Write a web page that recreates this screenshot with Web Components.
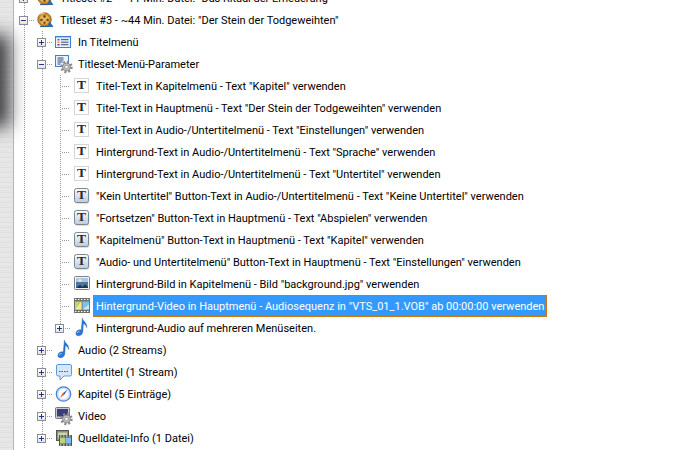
<!DOCTYPE html>
<html><head><meta charset="utf-8">
<style>
html,body{margin:0;padding:0;width:685px;height:450px;overflow:hidden;background:#fff}
body{font:11px Roboto,"Noto Sans",sans-serif;color:#000}
</style></head><body>
<app-window>
<tree-row lvl="0" kind="plus" icon="reel">Titleset #2 - ~11 Min. Datei: "Das Ritual der Erneuerung"</tree-row>
<tree-row lvl="0" kind="minus" icon="reel">Titleset #3 - ~44 Min. Datei: "Der Stein der Todgeweihten"</tree-row>
<tree-row lvl="1" kind="plus" icon="list">In Titelmenü</tree-row>
<tree-row lvl="1" kind="minus" icon="listgear">Titleset-Menü-Parameter</tree-row>
<tree-row lvl="2" kind="leaf" icon="t">Titel-Text in Kapitelmenü - Text "Kapitel" verwenden</tree-row>
<tree-row lvl="2" kind="leaf" icon="t">Titel-Text in Hauptmenü - Text "Der Stein der Todgeweihten" verwenden</tree-row>
<tree-row lvl="2" kind="leaf" icon="t">Titel-Text in Audio-/Untertitelmenü - Text "Einstellungen" verwenden</tree-row>
<tree-row lvl="2" kind="leaf" icon="t">Hintergrund-Text in Audio-/Untertitelmenü - Text "Sprache" verwenden</tree-row>
<tree-row lvl="2" kind="leaf" icon="t">Hintergrund-Text in Audio-/Untertitelmenü - Text "Untertitel" verwenden</tree-row>
<tree-row lvl="2" kind="leaf" icon="tb">"Kein Untertitel" Button-Text in Audio-/Untertitelmenü - Text "Keine Untertitel" verwenden</tree-row>
<tree-row lvl="2" kind="leaf" icon="tb">"Fortsetzen" Button-Text in Hauptmenü - Text "Abspielen" verwenden</tree-row>
<tree-row lvl="2" kind="leaf" icon="tb">"Kapitelmenü" Button-Text in Hauptmenü - Text "Kapitel" verwenden</tree-row>
<tree-row lvl="2" kind="leaf" icon="tb">"Audio- und Untertitelmenü" Button-Text in Hauptmenü - Text "Einstellungen" verwenden</tree-row>
<tree-row lvl="2" kind="leaf" icon="img">Hintergrund-Bild in Kapitelmenü - Bild "background.jpg" verwenden</tree-row>
<tree-row lvl="2" kind="leaf" icon="film" selected>Hintergrund-Video in Hauptmenü - Audiosequenz in "VTS_01_1.VOB" ab 00:00:00 verwenden</tree-row>
<tree-row lvl="2" kind="plus" icon="note" last>Hintergrund-Audio auf mehreren Menüseiten.</tree-row>
<tree-row lvl="1" kind="plus" icon="note">Audio (2 Streams)</tree-row>
<tree-row lvl="1" kind="plus" icon="bubble">Untertitel (1 Stream)</tree-row>
<tree-row lvl="1" kind="plus" icon="clock">Kapitel (5 Einträge)</tree-row>
<tree-row lvl="1" kind="plus" icon="video">Video</tree-row>
<tree-row lvl="1" kind="plus" icon="source" last>Quelldatei-Info (1 Datei)</tree-row>
</app-window>
<script>
const GEAR=`<g transform="translate(11.5 11)"><circle r="4.6" fill="none" stroke="#8a8a8a" stroke-width="3.2" stroke-dasharray="1.8 1.8"/><circle r="4" fill="#c4c4c4" stroke="#7a7a7a" stroke-width=".8"/><circle r="1.9" fill="#efefef" stroke="#808080" stroke-width=".7"/></g>`;
const T=`<text x="8.5" y="11" text-anchor="middle" font-family="Liberation Serif" font-weight="700" font-size="13.5" fill="#2a2a2a">T</text>`;
const ICONS={
reel:`<circle cx="7.5" cy="7.5" r="6.8" fill="#c98a2c" stroke="#8a5a1a" stroke-width=".8"/><circle cx="7.5" cy="7.5" r="4.8" fill="#e8b75a"/><circle cx="7.5" cy="4.4" r="1.3" fill="#6b4a20"/><circle cx="4.4" cy="8" r="1.3" fill="#6b4a20"/><circle cx="10.6" cy="8" r="1.3" fill="#6b4a20"/><circle cx="7.5" cy="10.8" r="1.2" fill="#6b4a20"/><path d="M1.5 2.5l6-1.5" stroke="#f0dcae" stroke-width="1"/><path d="M10.5 14l2-5 4 6h-6z" fill="#2f6fa8"/><path d="M3 14.5h9" stroke="#3b5f80" stroke-width="1.2"/>`,
list:`<rect x=".5" y="2.5" width="15" height="11" fill="#eaf3fd" stroke="#3f7fd0"/><rect x="1" y="3" width="14" height="1.2" fill="#a9cdf2"/><rect x="2.5" y="5" width="2" height="1.5" fill="#d8402a"/><rect x="2.5" y="7.5" width="2" height="1.5" fill="#e8a020"/><rect x="2.5" y="10" width="2" height="1.5" fill="#7030a0"/><path d="M6 5.7h7.5M6 8.2h7.5M6 10.7h7.5" stroke="#304a78"/>`,
listgear:`<rect x=".5" y="-.5" width="13" height="11" fill="#eaf3fd" stroke="#3f7fd0"/><path d="M2.5 2h6M2.5 4h6M2.5 6h5M2.5 8h3" stroke="#304a78"/>${GEAR}`,
t:`<rect x="1.5" y=".5" width="14" height="14" fill="#fff" stroke="#aaa" stroke-dasharray="1 1"/>${T}`,
tb:`<defs><linearGradient id="b" x1="0" y1="0" x2="0" y2="1"><stop offset="0" stop-color="#fbfcfe"/><stop offset="1" stop-color="#bccbdc"/></linearGradient></defs><rect x="2.5" y="2" width="14" height="14" rx="2" fill="#bbb" opacity=".45"/><rect x="1.5" y=".5" width="14" height="14" rx="2" fill="url(#b)" stroke="#7a8796"/>${T}`,
img:`<rect x="1.5" y=".5" width="15" height="13" rx="1" fill="#f4f4f4" stroke="#808080"/><rect x="3" y="2" width="12" height="10" fill="#4a76a8"/><rect x="3" y="2" width="12" height="4" fill="#a8c8e6"/><circle cx="7" cy="4.5" r="1.6" fill="#f5e9b0"/><path d="M3 12l4-3 3 2 2-3 1.5 2 1.5 1v1z" fill="#1d3350"/>`,
film:`<rect x="1" y="0" width="16" height="15" fill="#707070"/><path d="M2 1.5h1.5M5 1.5h1.5M8 1.5h1.5M11 1.5h1.5M14 1.5h1.5M2 13.5h1.5M5 13.5h1.5M8 13.5h1.5M11 13.5h1.5M14 13.5h1.5" stroke="#fff"/><rect x="2" y="3.5" width="6.5" height="8" fill="#b8d676"/><path d="M2 11.5l6.5-8v8z" fill="#f3ea90"/><rect x="9.5" y="3.5" width="6.5" height="8" fill="#7fc0ea"/><path d="M9.5 11.5l6.5-5v5z" fill="#c6e6fa"/>`,
note:`<path d="M9.4-2c.2 3.4 4.8 4.2 4.3 9.6-.7-2.7-2-3.6-3.4-3.9L9.8 12c-.2 2.1-2.2 3.8-4.3 3.8-1.6 0-2.6-1-2.6-2.4 0-2.1 2.1-3.6 4-3.6.6 0 1 .1 1.4.3z" fill="#2a78d6" stroke="#1a55a8" stroke-width=".4"/><path d="M4.2 13.2c.2-1 1.2-1.7 2.2-1.7" stroke="#bfe0ff" fill="none"/>`,
bubble:`<path d="M3 .5h12a1.5 1.5 0 011.5 1.5v8.5a1.5 1.5 0 01-1.5 1.5H9l-4 4v-4H3a1.5 1.5 0 01-1.5-1.5V2A1.5 1.5 0 013 .5z" fill="#d5e8fa" stroke="#5c9ade"/><path d="M4 7.5h1.5M6.5 7.5H8M9 7.5h1.5M11.5 7.5H13" stroke="#2a5fa8"/>`,
clock:`<circle cx="8.5" cy="8" r="7.2" fill="#dcebfb" stroke="#4a7fc8" stroke-width="1.3"/><circle cx="8.5" cy="8" r="5.4" fill="#fff" stroke="#b8d0ea" stroke-width=".6"/><path d="M12.5 3.5L9.3 8.7 7.8 7.2z" fill="#3060a8"/><path d="M4.8 11.7L7.8 7.2 9.3 8.7z" fill="#e0522a"/>`,
video:`<rect x=".5" y="-.5" width="14" height="11" rx="1" fill="#c8c8d0" stroke="#777"/><rect x="2" y="1" width="11" height="7.5" fill="#3c3c78"/>${GEAR}`,
source:`<rect x="1.5" y=".5" width="12" height="10" fill="#8a8a8a" stroke="#555"/><rect x="3" y="2.5" width="9" height="6" fill="#c8d8a0"/><rect x="4" y="5" width="13" height="11" fill="#555"/><path d="M5 6h1.5M8 6h1.5M11 6h1.5M14 6h1.5M5 15h1.5M8 15h1.5M11 15h1.5M14 15h1.5" stroke="#fff"/><rect x="5" y="7.5" width="5.5" height="6" fill="#b8d676"/><rect x="11" y="7.5" width="5" height="6" fill="#7fc0ea"/>`
};
customElements.define('tree-icon',class extends HTMLElement{
  static get observedAttributes(){return['name']}
  constructor(){super();this.attachShadow({mode:'open'});}
  attributeChangedCallback(){
    this.shadowRoot.innerHTML=`<style>:host{display:block;width:16px;height:16px;flex:none}svg{display:block;overflow:visible}</style><svg width="16" height="16" viewBox="0 0 16 16">${ICONS[this.getAttribute('name')]||''}</svg>`;
  }
});
customElements.define('tree-toggle',class extends HTMLElement{
  static get observedAttributes(){return['kind']}
  constructor(){super();this.attachShadow({mode:'open'});}
  attributeChangedCallback(){
    const k=this.getAttribute('kind');
    this.shadowRoot.innerHTML=`<style>
    :host{display:block;width:9px;height:9px;box-sizing:border-box;border:1px solid #8c8c94;background:linear-gradient(#fff,#e4e4e0);position:relative}
    .h,.v{position:absolute;background:#22348c}
    .h{left:1px;top:3px;width:5px;height:1px}
    .v{left:3px;top:1px;width:1px;height:5px}
    </style><div class="h"></div>${k==='plus'?'<div class="v"></div>':''}`;
  }
});
const DV='repeating-linear-gradient(#999 0 1px,transparent 1px 2px)';
const DH='repeating-linear-gradient(90deg,#999 0 1px,transparent 1px 2px)';
const tpl=document.createElement('template');
tpl.innerHTML=`<style>
:host{display:flex;height:22px;align-items:center;white-space:nowrap}
.g{width:18px;height:22px;flex:none;background:${DV} 9px 0/1px 100% no-repeat}
.e{width:22px;height:22px;flex:none;box-sizing:border-box;padding-left:4px;display:flex;align-items:center;background:${DV} 9px 0/1px 100% no-repeat,${DH} 14px 11px/6px 1px no-repeat}
.e.last{background:${DV} 9px 0/1px 11px no-repeat,${DH} 14px 11px/6px 1px no-repeat}
.leaf{width:22px;height:22px;flex:none;background:${DV} 9px 0/1px 100% no-repeat,${DH} 11px 11px/8px 1px no-repeat}
.lbl{height:22px;line-height:24px;padding:0 3px;margin-left:4px;box-sizing:border-box;color:#000}
:host([selected]) .lbl{background:#3399ff;color:#fff;outline:1px dotted #c9780f;outline-offset:-1px}
</style><span id="g" style="display:contents"></span><tree-icon id="i"></tree-icon><div class="lbl"><slot></slot></div>`;
customElements.define('tree-row',class extends HTMLElement{
  constructor(){super();
    this.attachShadow({mode:'open'}).appendChild(tpl.content.cloneNode(true));
  }
  connectedCallback(){
    const s=this.shadowRoot;
    s.getElementById('i').setAttribute('name',this.getAttribute('icon'));
    const lvl=+this.getAttribute('lvl'),kind=this.getAttribute('kind');
    let h='<div class="g"></div>'.repeat(lvl);
    h+=kind==='leaf'?'<div class="leaf"></div>':`<div class="e${this.hasAttribute('last')?' last':''}"><tree-toggle kind="${kind}"></tree-toggle></div>`;
    s.getElementById('g').innerHTML=h;
  }
});
customElements.define('app-window',class extends HTMLElement{
  constructor(){super();
    this.attachShadow({mode:'open'}).innerHTML=`<style>
    :host{display:flex;width:685px;height:450px;overflow:hidden;background:#fff;position:relative}
    .side{width:13px;flex:none;height:450px;background:repeating-linear-gradient(#e5e5e5 0 2px,#dfdfdf 2px 3px,#e7e7e7 3px 5px);border-right:1px solid #b4b4bc}
    .shadow{position:absolute;left:-12px;top:44px;width:12px;height:74px;background:#1c1c22;box-shadow:0 0 18px 9px rgba(28,28,34,.85)}
    .tree{flex:1;margin-top:-13px;padding-left:1px;min-width:0}
    </style><div class="side"></div><div class="tree"><slot></slot></div><div class="shadow"></div>`;
  }
});
</script>
</body></html>
